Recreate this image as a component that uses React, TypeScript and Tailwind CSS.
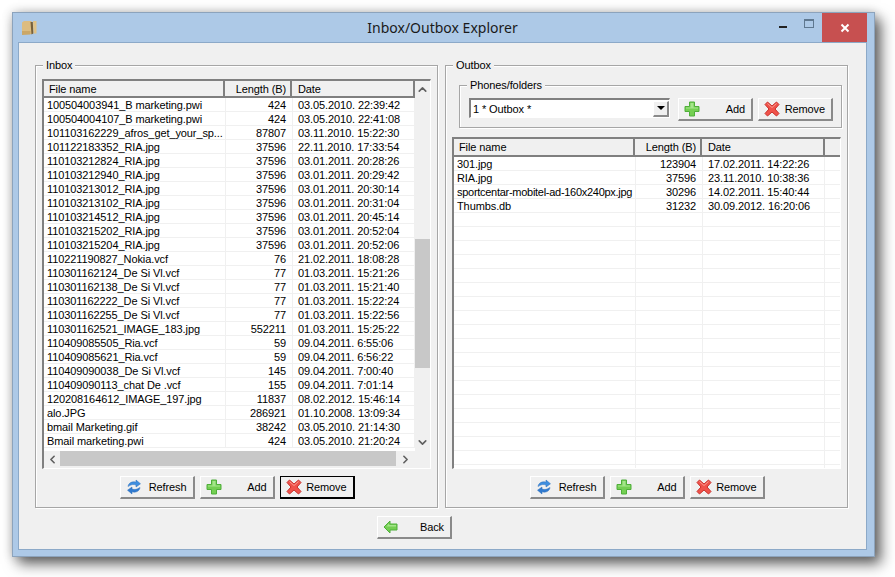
import React from "react";
import { ChevronUp, ChevronDown, ChevronLeft, ChevronRight } from "lucide-react";

type Row = [string, string, string];

const inboxRows: Row[] = [
  ["100504003941_B marketing.pwi", "424", "03.05.2010. 22:39:42"],
  ["100504004107_B marketing.pwi", "424", "03.05.2010. 22:41:08"],
  ["101103162229_afros_get_your_sp...", "87807", "03.11.2010. 15:22:30"],
  ["101122183352_RIA.jpg", "37596", "22.11.2010. 17:33:54"],
  ["110103212824_RIA.jpg", "37596", "03.01.2011. 20:28:26"],
  ["110103212940_RIA.jpg", "37596", "03.01.2011. 20:29:42"],
  ["110103213012_RIA.jpg", "37596", "03.01.2011. 20:30:14"],
  ["110103213102_RIA.jpg", "37596", "03.01.2011. 20:31:04"],
  ["110103214512_RIA.jpg", "37596", "03.01.2011. 20:45:14"],
  ["110103215202_RIA.jpg", "37596", "03.01.2011. 20:52:04"],
  ["110103215204_RIA.jpg", "37596", "03.01.2011. 20:52:06"],
  ["110221190827_Nokia.vcf", "76", "21.02.2011. 18:08:28"],
  ["110301162124_De Si Vl.vcf", "77", "01.03.2011. 15:21:26"],
  ["110301162138_De Si Vl.vcf", "77", "01.03.2011. 15:21:40"],
  ["110301162222_De Si Vl.vcf", "77", "01.03.2011. 15:22:24"],
  ["110301162255_De Si Vl.vcf", "77", "01.03.2011. 15:22:56"],
  ["110301162521_IMAGE_183.jpg", "552211", "01.03.2011. 15:25:22"],
  ["110409085505_Ria.vcf", "59", "09.04.2011. 6:55:06"],
  ["110409085621_Ria.vcf", "59", "09.04.2011. 6:56:22"],
  ["110409090038_De Si Vl.vcf", "145", "09.04.2011. 7:00:40"],
  ["110409090113_chat De .vcf", "155", "09.04.2011. 7:01:14"],
  ["120208164612_IMAGE_197.jpg", "11837", "08.02.2012. 15:46:14"],
  ["alo.JPG", "286921", "01.10.2008. 13:09:34"],
  ["bmail Marketing.gif", "38242", "03.05.2010. 21:14:30"],
  ["Bmail marketing.pwi", "424", "03.05.2010. 21:20:24"],
];

const outboxRows: Row[] = [
  ["301.jpg", "123904", "17.02.2011. 14:22:26"],
  ["RIA.jpg", "37596", "23.11.2010. 10:38:36"],
  ["sportcentar-mobitel-ad-160x240px.jpg", "30296", "14.02.2011. 15:40:44"],
  ["Thumbs.db", "31232", "30.09.2012. 16:20:06"],
  ...Array.from({ length: 19 }, (): Row => ["", "", ""]),
];

function PlusIcon() {
  return (
    <svg width="16" height="16" viewBox="0 0 16 16" className="shrink-0">
      <path d="M5.500 1h5v4.500H15v5h-4.500V15h-5v-4.500H1v-5h4.500z" fill="#74cf52" stroke="#4fae3a" strokeWidth="1" />
      <path d="M6.500 2h3v4.500H14v1H2v-1h4.500z" fill="#a4e58a" />
    </svg>
  );
}

function CrossIcon() {
  return (
    <svg width="16" height="16" viewBox="0 0 16 16" className="shrink-0">
      <path d="M1 3.500 3.500 1 8 5l4.500-4L15 3.500 11 8l4 4.500-2.500 2.500L8 11l-4.500 4L1 12.500 5 8z" fill="#f0524a" stroke="#c9302a" strokeWidth="1" strokeLinejoin="round" />
      <path d="M3.500 2.500 8 6.500l4.500-4" fill="none" stroke="#fb9a90" strokeWidth="1" />
    </svg>
  );
}

function RefreshIcon() {
  return (
    <svg width="16" height="16" viewBox="0 0 16 16" className="shrink-0">
      <path d="M2 7.500C2.500 4 6 2 10 3.200V1l4.500 3.800L10 8V6C7.500 5 5 5.500 2 7.500z" fill="#3f8fe0" stroke="#2a6db8" strokeWidth="0.5" />
      <path d="M14 8.500C13.500 12 10 14 6 12.800V15L1.500 11.200 6 8v2c2.500 1 5 .5 8-1.500z" fill="#2f7ad0" stroke="#2a6db8" strokeWidth="0.5" />
    </svg>
  );
}

function BackIcon() {
  return (
    <svg width="15" height="14" viewBox="0 0 15 14" className="shrink-0">
      <path d="M7 1v3h7v6H7v3L1 7z" fill="#74cf52" stroke="#4fae3a" strokeWidth="1" strokeLinejoin="round" />
      <path d="M6 3.500V5h7v1.500H3.500z" fill="#a4e58a" />
    </svg>
  );
}

function AppIcon() {
  return (
    <svg width="16" height="16" viewBox="0 0 16 16" className="ml-[3px] mt-[1px] shrink-0">
      <path d="M1 2.500 3 1h7.500l1 13H3L1 15z" fill="#dcbc80" />
      <path d="M12 1h3.500v12.500H12.500z" fill="#e0c286" />
      <path d="M9.500 2H11.800l.5 11.500L10.500 14.500z" fill="#76603c" />
      <path d="M1 11h8.500v3.500L1 15z" fill="#cba767" />
    </svg>
  );
}

function Btn({ icon, label, focused }: { icon: React.ReactNode; label: string; focused?: boolean }) {
  return (
    <div
      className={
        focused
          ? "flex h-[23px] w-[75px] shrink-0 items-center justify-between border border-r-2 border-b-2 border-black bg-[#f0f0f0] pl-[5px] pr-[6px]"
          : "flex h-[23px] w-[75px] shrink-0 items-center justify-between border-t border-l border-r-2 border-b-2 border-t-white border-l-white border-r-[#8a8a8a] border-b-[#8a8a8a] bg-[#f0f0f0] pl-[5px] pr-[6px]"
      }
    >
      {icon}
      <span className="pt-[1px]">{label}</span>
    </div>
  );
}

function Group({ title, className, children }: { title: string; className: string; children: React.ReactNode }) {
  return (
    <div className={"relative border border-[#a6a6a6] shadow-[1px_1px_0_#ffffff,inset_1px_1px_0_#ffffff] " + className}>
      <span className="absolute left-[7px] top-[-8px] bg-[#f0f0f0] px-[3px] leading-[14px]">{title}</span>
      {children}
    </div>
  );
}

function Header({ extra }: { extra?: boolean }) {
  const cell = "h-full shrink-0 border-r-2 border-b-2 border-r-[#7f7f7f] border-b-[#7f7f7f] bg-[#f0f0f0] leading-[17px] ";
  return (
    <div className={extra ? "flex h-[18px] w-full" : "flex h-[17px] w-full"}>
      <div className={cell + "w-[181px] pl-[5px]"}>File name</div>
      <div className={cell + "w-[67px] pr-[4px] text-right"}>Length (B)</div>
      <div className={cell + "w-[123px] pl-[6px]"}>Date</div>
      {extra && <div className="h-full flex-1 border-b-2 border-b-[#7f7f7f] bg-[#f0f0f0]" />}
    </div>
  );
}

function Rows({ rows, extra }: { rows: Row[]; extra?: boolean }) {
  return (
    <div className="flex w-full flex-col bg-white">
      {rows.map((r, i) => (
        <div key={i} className="flex h-[14px] w-full border-b border-[#f0f0f0] leading-[14px]">
          <div
            className={
              r[0].length > 34
                ? "h-[14px] w-[182px] shrink-0 overflow-hidden whitespace-nowrap border-r border-[#f0f0f0] pl-[3px] tracking-[-0.28px]"
                : "h-[14px] w-[182px] shrink-0 overflow-hidden whitespace-nowrap border-r border-[#f0f0f0] pl-[3px]"
            }
          >
            {r[0]}
          </div>
          <div className="h-[14px] w-[67px] shrink-0 border-r border-[#f0f0f0] pr-[6px] text-right">{r[1]}</div>
          <div className="h-[14px] w-[122px] shrink-0 whitespace-nowrap border-r border-[#f0f0f0] pl-[5px]">{r[2]}</div>
          {extra && <div className="flex-1" />}
        </div>
      ))}
    </div>
  );
}

function ButtonRow({ focusRemove, className }: { focusRemove?: boolean; className: string }) {
  return (
    <div className={"flex justify-center gap-[5px] pl-[1px] " + className}>
      <Btn icon={<RefreshIcon />} label="Refresh" />
      <Btn icon={<PlusIcon />} label="Add" />
      <Btn icon={<CrossIcon />} label="Remove" focused={focusRemove} />
    </div>
  );
}

export default function App() {
  return (
    <div className="h-[577px] w-[895px] overflow-hidden bg-white pl-[12px] pt-[12px] text-[11px] tracking-[-0.1px] text-black [font-family:'Liberation_Sans',Arial,sans-serif]">
      <div className="flex h-[545px] w-[863px] flex-col border border-[#8ca3bc] bg-[#adc9e7] pb-[6px] pl-[5px] pr-[7px] shadow-[6px_7px_13px_rgba(0,0,0,0.6),0_0_10px_rgba(0,0,0,0.2)]">
        {/* Title bar */}
        <div className="relative flex h-[29px] shrink-0 items-center justify-between">
          <AppIcon />
          <span className="absolute inset-x-0 text-center text-[14px] tracking-normal text-[#1a1a1a] [font-family:'Noto_Sans',sans-serif]">
            Inbox/Outbox Explorer
          </span>
          <div className="z-10 flex h-full items-start">
            <div className="flex h-[15px] w-[26px] items-end justify-center">
              <div className="h-[2px] w-[8px] bg-[#222222]" />
            </div>
            <div className="flex h-[15px] w-[26px] items-end justify-center">
              <div className="h-[9px] w-[10px] border border-t-2 border-[#5f7890]" />
            </div>
            <div className="flex h-[29px] w-[45px] items-center justify-center bg-[#c75050]">
              <svg width="10" height="10" viewBox="0 0 10 10">
                <path d="M1.500 1.500l7 7M8.500 1.500l-7 7" stroke="#ffffff" strokeWidth="2" />
              </svg>
            </div>
          </div>
        </div>

        {/* Client */}
        <div className="flex h-[508px] flex-col border border-[#8ca9c8] bg-[#f0f0f0] pl-[16px] pt-[22px]">
          <div className="flex h-[443px] w-full gap-[7px]">
            {/* Inbox */}
            <Group title="Inbox" className="h-[443px] w-[403px] px-[6px] pt-[13px]">
              <div className="flex h-[390px] w-[389px] flex-col border-t-2 border-l-2 border-r border-b border-t-[#808080] border-l-[#808080] border-r-white border-b-white">
                <div className="flex h-[370px]">
                  <div className="w-[371px] overflow-hidden bg-white">
                    <Header />
                    <Rows rows={inboxRows} />
                  </div>
                  <div className="flex w-[15px] flex-1 flex-col items-center bg-[#f0f0f0]">
                    <div className="flex h-[17px] w-full items-center justify-center">
                      <ChevronUp size={13} strokeWidth={3} color="#606060" />
                    </div>
                    <div className="mt-[141px] h-[129px] w-full bg-[#c8c8c8]" />
                    <div className="mt-[66px] flex h-[17px] w-full items-center justify-center">
                      <ChevronDown size={13} strokeWidth={3} color="#606060" />
                    </div>
                  </div>
                </div>
                <div className="flex h-[17px] bg-[#f0f0f0]">
                  <div className="flex h-[16px] w-[16px] items-center justify-center">
                    <ChevronLeft size={13} strokeWidth={3} color="#606060" />
                  </div>
                  <div className="h-[15px] w-[336px] bg-[#c8c8c8]" />
                  <div className="flex h-[16px] w-[19px] items-center justify-center">
                    <ChevronRight size={13} strokeWidth={3} color="#606060" />
                  </div>
                </div>
              </div>
              <ButtonRow focusRemove className="mt-[7px]" />
            </Group>

            {/* Outbox */}
            <Group title="Outbox" className="h-[443px] w-[403px] px-[6px] pt-[19px]">
              <Group title="Phones/folders" className="ml-[7px] h-[43px] w-[383px] pl-[9px] pt-[12px]">
                <div className="flex">
                  <div className="flex h-[20px] w-[201px] items-center justify-between border-t-2 border-l-2 border-r border-b border-t-[#808080] border-l-[#808080] border-r-white border-b-white bg-white pl-[2px]">
                    <span className="leading-[14px]">1 * Outbox *</span>
                    <div className="flex h-[16px] w-[16px] items-center justify-center border-t border-l border-r-2 border-b-2 border-t-white border-l-white border-r-[#8a8a8a] border-b-[#8a8a8a] bg-[#f0f0f0]">
                      <svg width="8" height="4" viewBox="0 0 8 4">
                        <path d="M0 0h8L4 4z" fill="#000000" />
                      </svg>
                    </div>
                  </div>
                  <div className="ml-[8px] flex gap-[5px]">
                    <Btn icon={<PlusIcon />} label="Add" />
                    <Btn icon={<CrossIcon />} label="Remove" />
                  </div>
                </div>
              </Group>
              <div className="mt-[9px] h-[332px] w-[389px] overflow-hidden border-t-2 border-l-2 border-r border-b border-t-[#808080] border-l-[#808080] border-r-white border-b-white bg-white">
                <Header extra />
                <Rows rows={outboxRows} extra />
              </div>
              <ButtonRow className="mt-[7px]" />
            </Group>
          </div>
          <div className="ml-[342px] mt-[8px]">
            <Btn icon={<BackIcon />} label="Back" />
          </div>
        </div>
      </div>
    </div>
  );
}
